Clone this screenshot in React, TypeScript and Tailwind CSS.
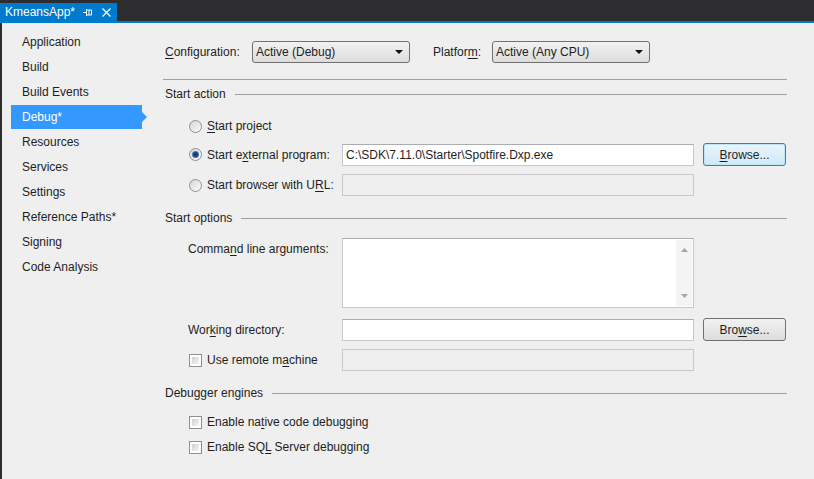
import React from 'react';

const font = { fontFamily: '"Liberation Sans", Arial, sans-serif' };

const navItems = [
  'Application',
  'Build',
  'Build Events',
  'Debug*',
  'Resources',
  'Services',
  'Settings',
  'Reference Paths*',
  'Signing',
  'Code Analysis',
];

// label with one underlined access-key letter
const Mn: React.FC<{ text: string; at: number }> = ({ text, at }) => (
  <span>
    {text.slice(0, at)}
    <span className="underline underline-offset-2">{text[at]}</span>
    {text.slice(at + 1)}
  </span>
);

const Radio: React.FC<{ checked?: boolean }> = ({ checked }) => (
  <span className="w-[13px] h-[13px] rounded-full border border-[#8e8f8f] bg-gradient-to-br from-[#d6d6d6] to-[#fbfbfb] flex items-center justify-center shrink-0">
    {checked && <span className="w-[5px] h-[5px] rounded-full bg-[#1b3f74] ring-1 ring-[#4a78b8]" />}
  </span>
);

const Check: React.FC = () => (
  <span className="w-[13px] h-[13px] border border-[#8e8f8f] bg-white p-[2px] shrink-0 flex">
    <span className="flex-1 bg-gradient-to-br from-[#cbcfd5] to-[#f6f6f6]" />
  </span>
);

const Select: React.FC<{ value: string }> = ({ value }) => (
  <div className="w-[158px] h-[22px] rounded-[3px] border border-[#707070] bg-gradient-to-b from-[#f2f2f2] to-[#dcdcdc] flex items-center pl-[3px] pr-[6px]">
    <span className="flex-1">{value}</span>
    <svg width="8" height="4" viewBox="0 0 8 4">
      <path d="M0 0h8L4 4z" fill="#111" />
    </svg>
  </div>
);

const TextBox: React.FC<{ value?: string; disabled?: boolean }> = ({ value, disabled }) => (
  <div
    className={`w-[352px] h-[22px] border flex items-center px-[3px] ${
      disabled ? 'border-[#c9c9c9] bg-[#efefef]' : 'border-[#c5c8cf] border-t-[#abadb3] bg-white'
    }`}
  >
    {value}
  </div>
);

const BrowseBtn: React.FC<{ focused?: boolean; at: number }> = ({ focused, at }) => (
  <div
    className={`ml-[9px] w-[83px] h-[23px] rounded-[3px] border flex items-center justify-center ${
      focused
        ? 'border-[#3c7fb1] bg-gradient-to-b from-[#eaf6fd] to-[#d0e8f6] shadow-[inset_0_0_0_1px_#bfe3f8]'
        : 'border-[#707070] bg-gradient-to-b from-[#f2f2f2] to-[#dddddd]'
    }`}
  >
    <Mn text="Browse..." at={at} />
  </div>
);

const Header: React.FC<{ title: string; className?: string }> = ({ title, className }) => (
  <div className={`h-[16px] flex items-center pl-[2px] ${className ?? ''}`}>
    <span>{title}</span>
    <span className="flex-1 h-px bg-[#a0a0a0] ml-[9px]" />
  </div>
);

export default function App() {
  return (
    <div style={font} className="w-[814px] h-[479px] bg-[#2d2d30] flex flex-col text-[12px] text-[#1e1e1e] overflow-hidden">
      {/* document tab strip */}
      <div className="h-[21px] flex items-end shrink-0">
        <div className="h-[18px] w-[117px] bg-[#007acc] text-white flex items-center pl-[5px]">
          <span className="flex-1">KmeansApp*</span>
          <svg width="10" height="9" viewBox="0 0 10 9" className="mr-[9px]">
            <path d="M0 4.5h3M3.5 1v7M3.5 2h5v5h-5M6 2v5" stroke="#fff" strokeWidth="1" fill="none" />
          </svg>
          <svg width="9" height="9" viewBox="0 0 9 9" className="mr-[6px]">
            <path d="M0.5 0.5l8 8M8.5 0.5l-8 8" stroke="#fff" strokeWidth="1.3" />
          </svg>
        </div>
      </div>
      <div className="h-[2px] bg-[#007acc] shrink-0" />

      <div className="flex-1 flex ml-[2px] bg-[#efefef]">
        {/* side navigation */}
        <div className="w-[161px] pt-[7px] flex flex-col gap-[1px]">
          {navItems.map((item) =>
            item === 'Debug*' ? (
              <div key={item} className="relative ml-[9px] w-[131px] h-[24px] bg-[#3399ff] text-white flex items-center pl-[11px]">
                {item}
                <svg width="7" height="12" viewBox="0 0 7 12" className="absolute right-[-6px] top-[6px]">
                  <path d="M0 0L6 6L0 12z" fill="#3399ff" />
                </svg>
              </div>
            ) : (
              <div key={item} className="h-[24px] flex items-center pl-[20px]">
                {item}
              </div>
            )
          )}
        </div>

        {/* debug page */}
        <div className="flex-1 pr-[27px] flex flex-col">
          <div className="mt-[18px] h-[22px] flex items-center pl-[2px]">
            <span className="w-[87px]"><Mn text="Configuration:" at={0} /></span>
            <Select value="Active (Debug)" />
            <span className="w-[59px] ml-[23px]"><Mn text="Platform:" at={7} /></span>
            <Select value="Active (Any CPU)" />
          </div>
          <div className="mt-[16px] h-px bg-[#a0a0a0]" />

          <Header title="Start action" className="mt-[6px]" />
          <div className="mt-[13px] h-[22px] flex items-center pl-[26px] gap-[5px]">
            <Radio />
            <Mn text="Start project" at={0} />
          </div>
          <div className="mt-[6px] h-[23px] flex items-center pl-[26px]">
            <Radio checked />
            <span className="ml-[5px] w-[135px]"><Mn text="Start external program:" at={7} /></span>
            <TextBox value="C:\SDK\7.11.0\Starter\Spotfire.Dxp.exe" />
            <BrowseBtn focused at={0} />
          </div>
          <div className="mt-[8px] h-[22px] flex items-center pl-[26px]">
            <Radio />
            <span className="ml-[5px] w-[135px]"><Mn text="Start browser with URL:" at={20} /></span>
            <TextBox disabled />
          </div>

          <Header title="Start options" className="mt-[14px]" />
          <div className="mt-[12px] flex pl-[25px]">
            <span className="w-[154px] pt-[2px]"><Mn text="Command line arguments:" at={5} /></span>
            <div className="w-[352px] h-[70px] border border-[#c5c8cf] border-t-[#abadb3] bg-white flex justify-end p-[1px]">
              <div className="w-[16px] bg-[#f4f4f4] flex flex-col items-center justify-between py-[8px]">
                <svg width="7" height="4" viewBox="0 0 7 4"><path d="M0 4L3.5 0L7 4z" fill="#a6a6a6" /></svg>
                <svg width="7" height="4" viewBox="0 0 7 4"><path d="M0 0h7L3.5 4z" fill="#a6a6a6" /></svg>
              </div>
            </div>
          </div>
          <div className="mt-[10px] h-[23px] flex items-center pl-[25px]">
            <span className="w-[154px]"><Mn text="Working directory:" at={3} /></span>
            <TextBox />
            <BrowseBtn at={3} />
          </div>
          <div className="mt-[8px] h-[22px] flex items-center pl-[26px]">
            <Check />
            <span className="ml-[5px] w-[135px]"><Mn text="Use remote machine" at={12} /></span>
            <TextBox disabled />
          </div>

          <Header title="Debugger engines" className="mt-[14px]" />
          <div className="mt-[12px] h-[18px] flex items-center pl-[26px] gap-[5px]">
            <Check />
            <Mn text="Enable native code debugging" at={9} />
          </div>
          <div className="mt-[7px] h-[18px] flex items-center pl-[26px] gap-[5px]">
            <Check />
            <Mn text="Enable SQL Server debugging" at={9} />
          </div>
        </div>
      </div>
    </div>
  );
}
